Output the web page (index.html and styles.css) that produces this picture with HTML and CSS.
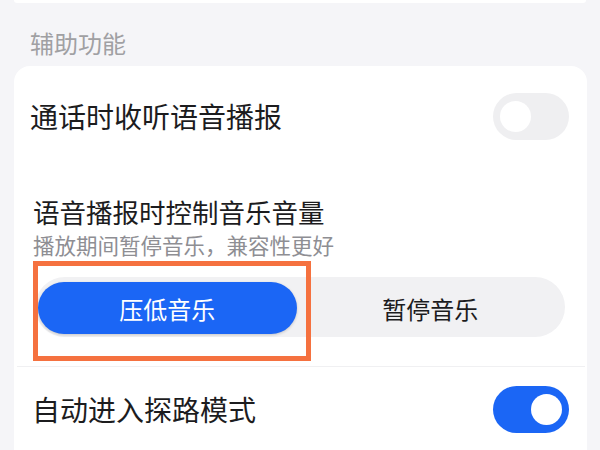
FILE: index.html
```html
<!DOCTYPE html>
<html lang="zh-CN">
<head>
<meta charset="utf-8">
<title>辅助功能</title>
<link rel="stylesheet" href="styles.css">
</head>
<body>
<div class="page">
  <div class="top-card"></div>
  <div class="section-title">辅助功能</div>
  <div class="card">
    <div class="row row-first">
      <div class="row-label">通话时收听语音播报</div>
      <div class="toggle toggle-off"><span class="knob"></span></div>
    </div>
    <div class="row-block">
      <div class="block-title">语音播报时控制音乐音量</div>
      <div class="block-sub">播放期间暂停音乐，兼容性更好</div>
      <div class="segmented">
        <div class="seg seg-active">压低音乐</div>
        <div class="seg">暂停音乐</div>
      </div>
    </div>
    <div class="divider"></div>
    <div class="row row-last">
      <div class="row-label">自动进入探路模式</div>
      <div class="toggle toggle-on"><span class="knob"></span></div>
    </div>
  </div>
  <div class="highlight"></div>
</div>
</body>
</html>
```

FILE: styles.css
```css
* {
  box-sizing: border-box;
}

html, body {
  margin: 0;
  padding: 0;
}

body {
  background: #f5f5f8;
  font-family: "Noto Sans CJK SC", "Noto Sans", sans-serif;
  width: 600px;
  height: 450px;
  overflow: hidden;
}

.page {
  position: relative;
  width: 600px;
  height: 450px;
}

.top-card {
  height: 3px;
  margin: 0 14px 0 14px;
  background: #ffffff;
  border-radius: 0 0 4px 4px;
}

.section-title {
  padding: 25px 0 8px 30px;
  line-height: 30px;
  font-size: 24px;
  color: #a0a0a3;
}

.card {
  margin: 0 13px 0 14px;
  background: #ffffff;
  border-radius: 16px 16px 0 0;
}

.row {
  display: flex;
  align-items: center;
  justify-content: space-between;
  padding: 0 18px 0 16px;
}

.row-first {
  height: 100px;
}

.row-last {
  height: 84px;
}

.row-label {
  font-size: 28px;
  line-height: 36px;
  color: #1c1c1e;
}

.row-last .row-label {
  padding-left: 2px;
}

.row-block {
  padding: 28px 18px 29px 19px;
}

.block-title {
  font-size: 26.5px;
  line-height: 36px;
  color: #1c1c1e;
}

.block-sub {
  margin-top: 1px;
  font-size: 21.5px;
  line-height: 28px;
  color: #8e8e93;
}

.segmented {
  margin: 18px 4px 0 2px;
  height: 60px;
  border-radius: 30px;
  background: #f1f1f3;
  padding: 5px 4px 3px 3px;
  display: grid;
  grid-template-columns: 1fr 1fr;
}

.seg {
  display: flex;
  align-items: center;
  justify-content: center;
  border-radius: 26px;
  font-size: 24px;
  color: #1c1c1e;
}

.seg-active {
  background: #1b66f5;
  color: #ffffff;
  box-shadow: 0 1px 3px rgba(0, 0, 0, 0.18);
  margin-right: 3px;
}

.divider {
  height: 1px;
  margin: 0 2px 0 3px;
  background: #f0f0f2;
}

.toggle {
  position: relative;
  width: 76px;
  height: 47px;
  border-radius: 24px;
  flex: none;
}

.toggle-off {
  background: #efeff1;
}

.toggle-on {
  background: #1b66f5;
}

.knob {
  position: absolute;
  top: 8px;
  width: 31px;
  height: 31px;
  border-radius: 50%;
  background: #ffffff;
}

.toggle-off .knob {
  left: 7px;
}

.toggle-on .knob {
  right: 7px;
}

.highlight {
  position: absolute;
  left: 33px;
  top: 261px;
  width: 278px;
  height: 100px;
  border: 5px solid #f5713f;
}
```
